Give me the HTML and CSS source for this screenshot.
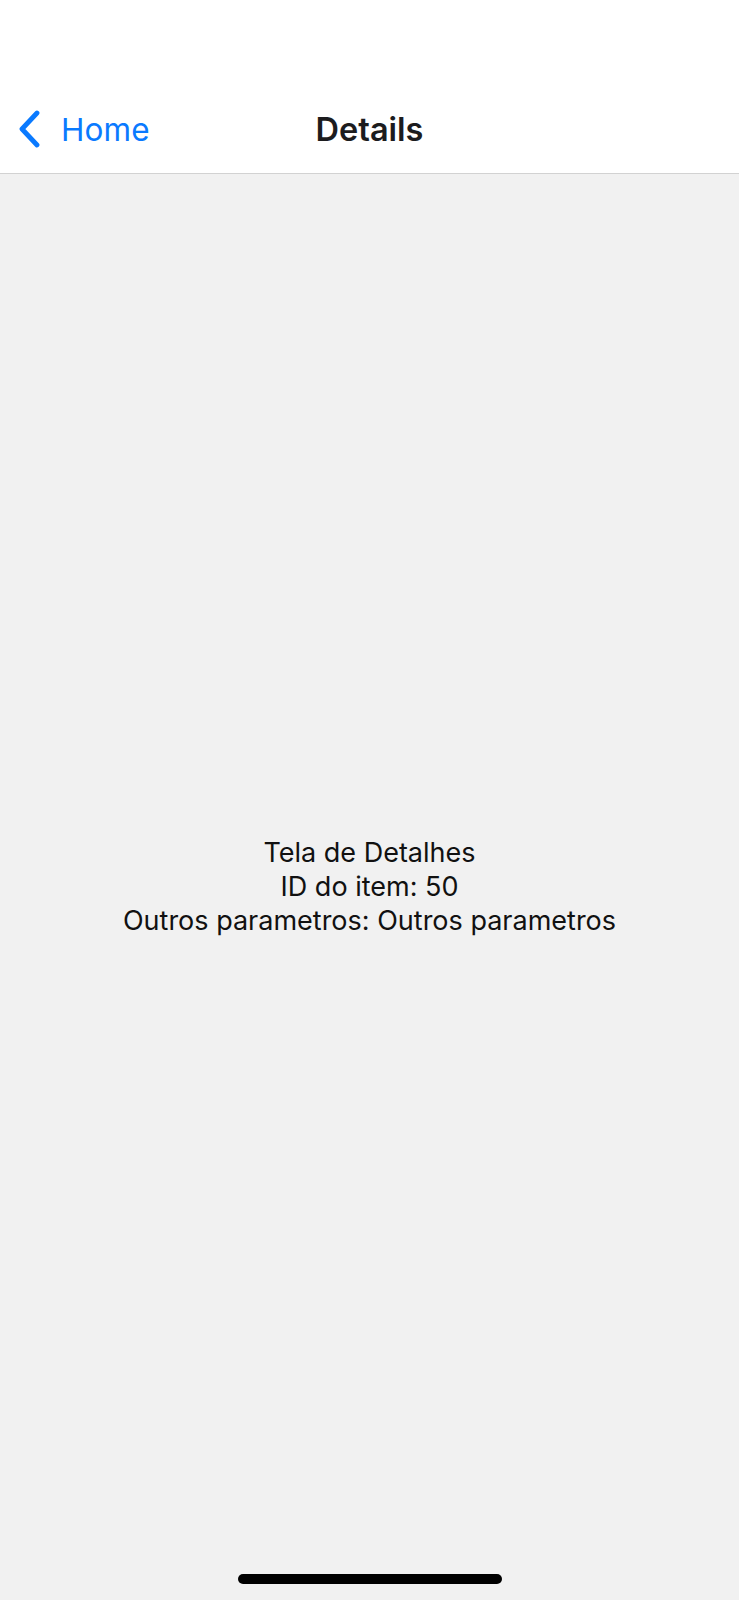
FILE: index.html
```html
<!DOCTYPE html>
<html lang="pt">
<head>
<meta charset="utf-8">
<link rel="stylesheet" href="styles.css">
</head>
<body>
<div class="screen">
  <header class="header">
    <div class="statusbar"></div>
    <div class="navbar">
      <a class="back">
        <svg class="chev" width="24" height="38" viewBox="0 0 24 38"><path d="M20 3 L5 19 L20 35" fill="none" stroke="#0a7aff" stroke-width="4.8" stroke-linecap="round" stroke-linejoin="round"/></svg>
        <span class="back-label">Home</span>
      </a>
      <div class="title">Details</div>
    </div>
  </header>
  <main class="content">
    <p class="line">Tela de Detalhes</p>
    <p class="line">ID do item: 50</p>
    <p class="line">Outros parametros: Outros parametros</p>
  </main>
  <div class="home-indicator"></div>
</div>
</body>
</html>
```
FILE: styles.css
```css
* { box-sizing: border-box; }
html, body { margin: 0; padding: 0; }
body {
  width: 739px;
  height: 1600px;
  font-family: Inter, "Noto Sans", sans-serif;
  background: #f1f1f1;
  overflow: hidden;
}
.screen {
  height: 1600px;
  display: flex;
  flex-direction: column;
  position: relative;
}
.header {
  background: #ffffff;
  border-bottom: 1.5px solid #d2d2d2;
  height: 174px;
  flex: none;
  display: flex;
  flex-direction: column;
}
.statusbar { height: 88px; flex: none; }
.navbar {
  flex: 1;
  position: relative;
  display: flex;
  align-items: center;
  padding-left: 17px;
  padding-bottom: 3px;
}
.back {
  display: flex;
  align-items: center;
  gap: 20px;
  color: #0a7aff;
}
.chev { display: block; }
.back-label {
  font-size: 31.5px;
  letter-spacing: 0.1px;
}
.title {
  position: absolute;
  left: 0;
  right: 0;
  top: 0;
  bottom: 3px;
  display: flex;
  align-items: center;
  justify-content: center;
  font-size: 32.5px;
  font-weight: 600;
  color: #1c1c1e;
  pointer-events: none;
}
.content {
  flex: 1;
  display: flex;
  flex-direction: column;
  align-items: center;
  justify-content: center;
}
.line {
  margin: 0;
  font-size: 27px;
  line-height: 34px;
  color: #111111;
}
.home-indicator {
  position: absolute;
  left: 238px;
  top: 1574px;
  width: 264px;
  height: 10px;
  border-radius: 5px;
  background: #000;
}
```
